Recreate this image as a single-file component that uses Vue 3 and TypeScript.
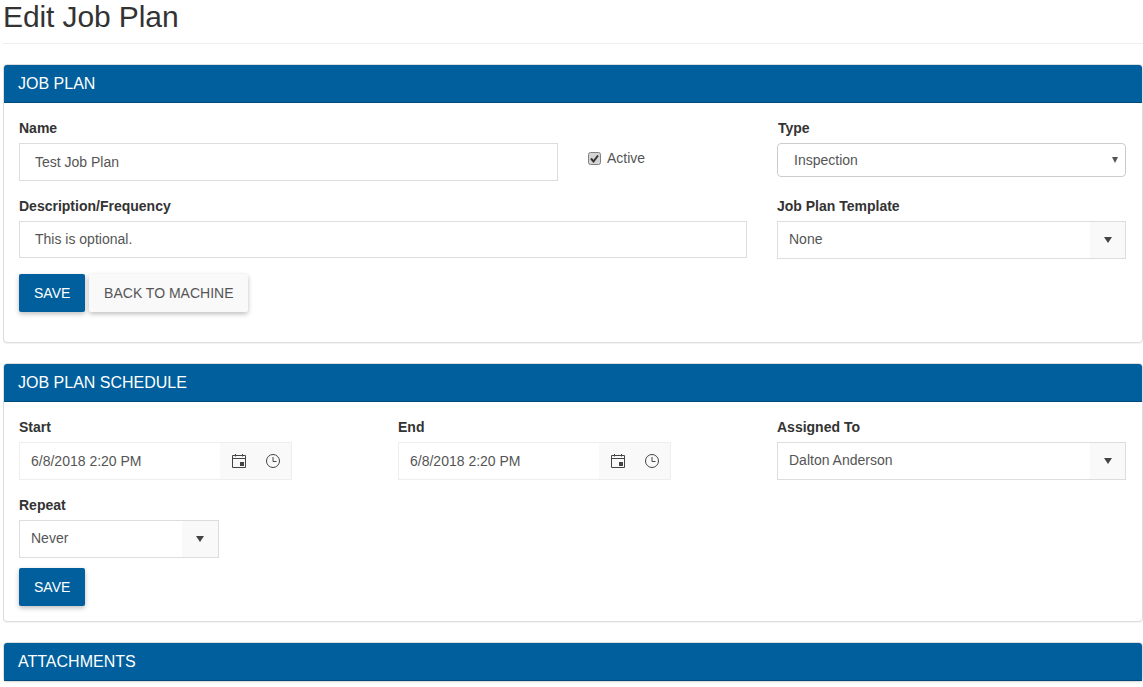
<script setup lang="ts">
const title = 'Edit Job Plan'
</script>

<template>
  <div class="page">
    <h1 class="title">{{ title }}</h1>
    <hr class="rule" />

    <section class="card">
      <header class="head">JOB PLAN</header>
      <div class="body plan">
        <div class="plan-left">
          <div class="name-row">
            <div class="field name">
              <label class="lab">Name</label>
              <div class="input pad">Test Job Plan</div>
            </div>
            <div class="active">
              <svg class="chk" width="13" height="13" viewBox="0 0 13 13">
                <rect x=".5" y=".5" width="12" height="12" rx="2" fill="#d4d4d4" stroke="#808080" />
                <path d="M3 6.500l2.500 3L10 3.500" fill="none" stroke="#333" stroke-width="2" />
              </svg>
              <span>Active</span>
            </div>
          </div>
          <div class="field desc">
            <label class="lab">Description/Frequency</label>
            <div class="input pad short-input">This is optional.</div>
          </div>
          <div class="btns">
            <button class="btn primary">SAVE</button>
            <button class="btn light">BACK TO MACHINE</button>
          </div>
        </div>
        <div class="plan-right">
          <div class="field">
            <label class="lab nudge">Type</label>
            <div class="native">
              <span>Inspection</span>
              <svg class="mini" width="6" height="6" viewBox="0 0 6 6"><path d="M0 0h6L3 6z" fill="#555" /></svg>
            </div>
          </div>
          <div class="field tpl">
            <label class="lab">Job Plan Template</label>
            <div class="combo">
              <span class="val">None</span>
              <span class="arrow"><svg width="8" height="6" viewBox="0 0 8 6"><path d="M0 0h8L4 6z" fill="#444" /></svg></span>
            </div>
          </div>
        </div>
      </div>
    </section>

    <section class="card">
      <header class="head">JOB PLAN SCHEDULE</header>
      <div class="body sched">
        <div class="cols">
          <div class="field">
            <label class="lab">Start</label>
            <div class="picker">
              <span class="date">6/8/2018 2:20 PM</span>
              <span class="icons">
                <svg width="16" height="16" viewBox="0 0 16 16" fill="none" stroke="#444"><path d="M1.500 2.500h13v12h-13zM1.500 5.500h13M4.500 1v2.500M11.500 1v2.500" /><rect x="9" y="9" width="4" height="4" fill="#444" stroke="none" /></svg>
                <svg width="16" height="16" viewBox="0 0 16 16" fill="none" stroke="#444"><circle cx="8" cy="8" r="6.500" /><path d="M8 4v4.500h3.500" /></svg>
              </span>
            </div>
          </div>
          <div class="field">
            <label class="lab">End</label>
            <div class="picker">
              <span class="date">6/8/2018 2:20 PM</span>
              <span class="icons">
                <svg width="16" height="16" viewBox="0 0 16 16" fill="none" stroke="#444"><path d="M1.500 2.500h13v12h-13zM1.500 5.500h13M4.500 1v2.500M11.500 1v2.500" /><rect x="9" y="9" width="4" height="4" fill="#444" stroke="none" /></svg>
                <svg width="16" height="16" viewBox="0 0 16 16" fill="none" stroke="#444"><circle cx="8" cy="8" r="6.500" /><path d="M8 4v4.500h3.500" /></svg>
              </span>
            </div>
          </div>
          <div class="field">
            <label class="lab">Assigned To</label>
            <div class="combo">
              <span class="val">Dalton Anderson</span>
              <span class="arrow"><svg width="8" height="6" viewBox="0 0 8 6"><path d="M0 0h8L4 6z" fill="#444" /></svg></span>
            </div>
          </div>
        </div>
        <div class="field repeat">
          <label class="lab">Repeat</label>
          <div class="combo small">
            <span class="val">Never</span>
            <span class="arrow"><svg width="8" height="6" viewBox="0 0 8 6"><path d="M0 0h8L4 6z" fill="#444" /></svg></span>
          </div>
        </div>
        <button class="btn primary solo">SAVE</button>
      </div>
    </section>

    <section class="card">
      <header class="head">ATTACHMENTS</header>
    </section>
  </div>
</template>

<style>
html, body { margin: 0; background: #fff; overflow: hidden; }
</style>

<style scoped>
.page {
  height: 687px;
  overflow: hidden;
  padding: 0 0 0 3px;
  font-family: "Liberation Sans", Arial, sans-serif;
  font-size: 14px;
  color: #333;
  box-sizing: border-box;
}
.title { margin: 0; font-size: 30px; font-weight: 400; line-height: 33px; color: #333; letter-spacing: -.1px; }
.rule { margin: 10px 0 20px; border: 0; border-top: 1px solid #eee; }
.card {
  border: 1px solid #ddd;
  border-radius: 4px;
  margin-bottom: 20px;
  box-shadow: 0 1px 1px rgba(0, 0, 0, .05);
  background: #fff;
}
.head {
  background: #005f9c;
  color: #fff;
  font-size: 16px;
  line-height: 18px;
  height: 38px;
  box-sizing: border-box;
  padding: 10px 14px 0;
  border-bottom: 1px solid #004a7a;
  border-radius: 3px 3px 0 0;
}
.body { padding: 15px 15px 0; box-sizing: border-box; }
.plan { display: flex; height: 239px; justify-content: space-between; padding-right: 16px; }
.plan-left { width: 728px; }
.plan-right { width: 349px; }
.name-row { display: flex; }
.field { display: flex; flex-direction: column; }
.name { width: 539px; }
.lab { font-weight: 700; line-height: 20px; margin-bottom: 5px; height: 20px; }
.nudge { padding-left: 1px; }
.input {
  border: 1px solid #ddd;
  height: 38px;
  box-sizing: border-box;
  line-height: 36px;
  color: #555;
}
.short-input { height: 37px; line-height: 35px; }
.pad { padding-left: 15px; }
.active { display: flex; align-items: center; margin: 30px 0 0 30px; height: 20px; color: #555; }
.chk { width: 13px; height: 13px; margin: 0 6px 0 0; flex: none; }
.desc { margin-top: 15px; }
.btns { display: flex; gap: 4px; margin-top: 16px; }
.btn {
  border: 0;
  border-radius: 2px;
  height: 38px;
  font: 14px "Liberation Sans", Arial, sans-serif;
  padding: 0 15px;
  box-shadow: 0 2px 5px rgba(0, 0, 0, .26);
}
.primary { background: #005f9c; color: #fff; }
.light { background: #f9f9f9; color: #555; width: 159px; padding: 0; }
.native {
  border: 1px solid #ccc;
  border-radius: 4px;
  height: 34px;
  box-sizing: border-box;
  display: flex;
  align-items: center;
  justify-content: space-between;
  padding: 0 7px 0 16px;
  color: #555;
}
.mini { flex: none; }
.tpl { margin-top: 19px; }
.combo, .picker {
  display: flex;
  height: 38px;
  box-sizing: border-box;
  border: 1px solid #ddd;
  align-items: stretch;
  color: #555;
}
.picker { width: 273px; border-color: #eee; }
.val { flex: 1; line-height: 34px; padding-left: 11px; }
.date { flex: 1; line-height: 36px; padding-left: 11px; }
.arrow { width: 35px; background: #f9f9f9; display: flex; align-items: center; justify-content: center; }
.small .arrow { width: 36px; }
.icons { width: 71px; background: #f9f9f9; display: flex; align-items: center; justify-content: center; gap: 18px; }
.cols { display: grid; grid-template-columns: 273px 273px 349px; column-gap: 106px; }
.repeat { margin-top: 15px; }
.small { width: 200px; }
.solo { display: block; margin-top: 10px; }
.sched { height: 219px; }
</style>
